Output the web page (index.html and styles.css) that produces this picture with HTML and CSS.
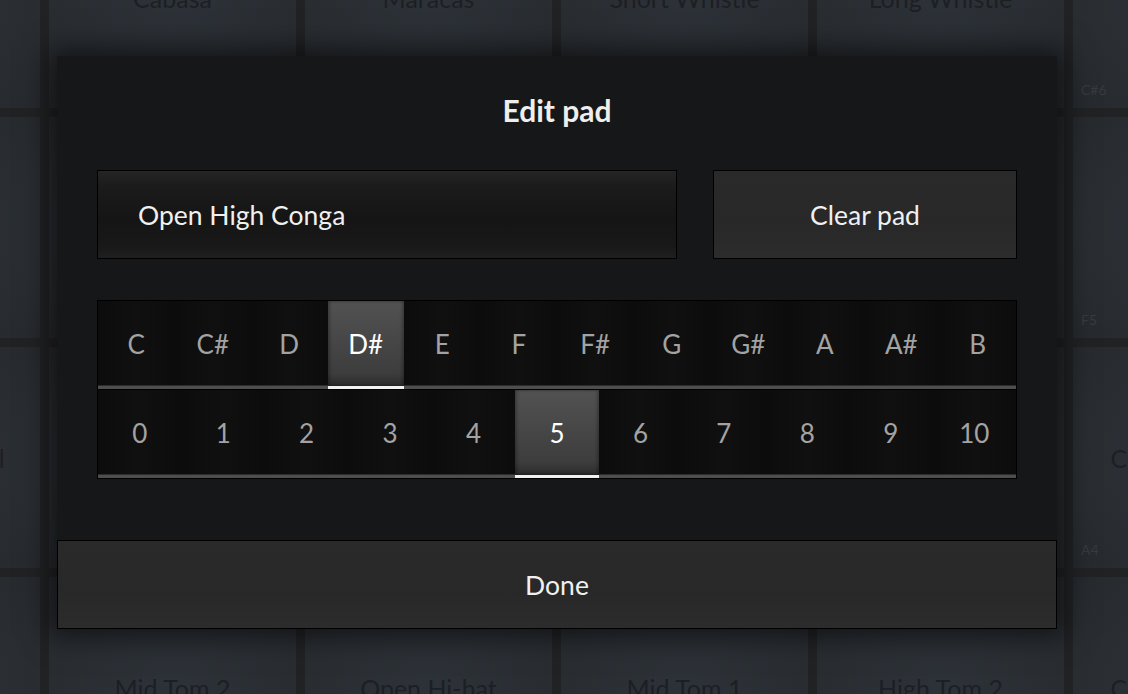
FILE: index.html
```html
<!DOCTYPE html>
<html lang="en">
<head>
  <meta charset="UTF-8">
  <title>Edit pad</title>
  <link rel="stylesheet" href="styles.css">
</head>
<body>
  <!-- pad grid behind the dialog -->
  <div class="pads">
    <div class="pad"><span class="pad-name">Vibraslap</span><span class="pad-note">A5</span></div>
    <div class="pad"><span class="pad-name">Cabasa</span><span class="pad-note">A#5</span></div>
    <div class="pad"><span class="pad-name">Maracas</span><span class="pad-note">B5</span></div>
    <div class="pad"><span class="pad-name">Short Whistle</span><span class="pad-note">C6</span></div>
    <div class="pad"><span class="pad-name">Long Whistle</span><span class="pad-note">C6</span></div>
    <div class="pad"><span class="pad-name">Short Guiro</span><span class="pad-note">C#6</span></div>

    <div class="pad"><span class="pad-name">High Agogo</span><span class="pad-note">G#5</span></div>
    <div class="pad"><span class="pad-name">Low Agogo</span><span class="pad-note">G5</span></div>
    <div class="pad"><span class="pad-name">Open High Conga</span><span class="pad-note">D#5</span></div>
    <div class="pad"><span class="pad-name">Low Conga</span><span class="pad-note">E5</span></div>
    <div class="pad"><span class="pad-name">High Timbale</span><span class="pad-note">F5</span></div>
    <div class="pad"><span class="pad-name">Low Bongo</span><span class="pad-note">F5</span></div>

    <div class="pad"><span class="pad-name">Chinese Cymbal</span><span class="pad-note">E4</span></div>
    <div class="pad"><span class="pad-name">Ride Bell</span><span class="pad-note">F4</span></div>
    <div class="pad"><span class="pad-name">Tambourine</span><span class="pad-note">F#4</span></div>
    <div class="pad"><span class="pad-name">Splash Cymbal</span><span class="pad-note">G4</span></div>
    <div class="pad"><span class="pad-name">Cowbell</span><span class="pad-note">G#4</span></div>
    <div class="pad"><span class="pad-name">Crash Cymbal 2</span><span class="pad-note">A4</span></div>

    <div class="pad"><span class="pad-name">Low Tom</span><span class="pad-note">A2</span></div>
    <div class="pad"><span class="pad-name">Mid Tom 2</span><span class="pad-note">B2</span></div>
    <div class="pad"><span class="pad-name">Open Hi-hat</span><span class="pad-note">A#2</span></div>
    <div class="pad"><span class="pad-name">Mid Tom 1</span><span class="pad-note">C3</span></div>
    <div class="pad"><span class="pad-name">High Tom 2</span><span class="pad-note">D3</span></div>
    <div class="pad"><span class="pad-name">Crash Cymbal 1</span><span class="pad-note">C#3</span></div>
  </div>

  <!-- edit dialog -->
  <div class="dialog">
    <h1 class="dialog-title">Edit pad</h1>

    <div class="top-row">
      <div class="name-field">Open High Conga</div>
      <button class="btn clear-btn">Clear pad</button>
    </div>

    <div class="picker">
      <div class="picker-row notes">
        <div class="cell">C</div>
        <div class="cell">C#</div>
        <div class="cell">D</div>
        <div class="cell selected">D#</div>
        <div class="cell">E</div>
        <div class="cell">F</div>
        <div class="cell">F#</div>
        <div class="cell">G</div>
        <div class="cell">G#</div>
        <div class="cell">A</div>
        <div class="cell">A#</div>
        <div class="cell">B</div>
      </div>
      <div class="picker-row octaves">
        <div class="cell">0</div>
        <div class="cell">1</div>
        <div class="cell">2</div>
        <div class="cell">3</div>
        <div class="cell">4</div>
        <div class="cell selected">5</div>
        <div class="cell">6</div>
        <div class="cell">7</div>
        <div class="cell">8</div>
        <div class="cell">9</div>
        <div class="cell">10</div>
      </div>
    </div>

    <button class="btn done-btn">Done</button>
  </div>
</body>
</html>
```

FILE: styles.css
```css
/* General styles */
body {
  margin: 0;
  padding: 0;
  background: #212224;
  font-family: 'Lato', 'Open Sans', sans-serif;
  overflow: hidden;
  height: 694px;
  position: relative;
}

/* Pad grid (dimmed, behind dialog) */
.pads {
  display: grid;
  grid-template-columns: repeat(6, 247px);
  grid-template-rows: repeat(4, 221px);
  gap: 9px;
  margin-left: -207px;
  margin-top: -113px;
}

.pad {
  position: relative;
  display: flex;
  align-items: center;
  justify-content: center;
  background: radial-gradient(ellipse at center, #2d3238 0%, #292d32 70%, #26292d 100%);
}

.pad-name {
  font-size: 25px;
  color: #1c1f23;
  white-space: nowrap;
}

.pad-note {
  position: absolute;
  left: 8px;
  bottom: 10px;
  font-size: 14px;
  color: #363b41;
}

/* Dialog */
.dialog {
  position: absolute;
  left: 57px;
  top: 56px;
  width: 1000px;
  height: 573px;
  background: #161718;
  box-shadow: 0 0 26px 8px rgba(0, 0, 0, 0.55);
  display: flex;
  flex-direction: column;
}

.dialog-title {
  margin: 0;
  height: 114px;
  padding-bottom: 6px;
  box-sizing: border-box;
  display: flex;
  align-items: center;
  justify-content: center;
  font-size: 30px;
  font-weight: bold;
  color: #eeeeee;
}

.top-row {
  display: flex;
  gap: 36px;
  padding: 0 40px;
  height: 89px;
}

.name-field {
  width: 580px;
  box-sizing: border-box;
  border: 1px solid #000;
  background: linear-gradient(to bottom, #252525 0%, #1b1b1b 18%, #151515 55%, #181818 85%, #1f1f1f 100%);
  color: #f0f0f0;
  font-size: 26.5px;
  display: flex;
  align-items: center;
  padding-left: 40px;
}

.btn {
  font-family: inherit;
  font-size: 26.5px;
  color: #f0f0f0;
  border: 1px solid #000;
  background: linear-gradient(to bottom, #2a2a2a, #282828 60%, #2c2c2c);
  cursor: pointer;
  padding: 0;
}

.clear-btn {
  flex: 1;
}

/* Note / octave picker */
.picker {
  margin: 41px 40px 0;
  border: 1px solid #000;
  border-top: none;
  background: #000;
}

.picker-row {
  display: flex;
  height: 89px;
  border-top: 1px solid #000;
  box-sizing: border-box;
}

.cell {
  flex: 1;
  display: flex;
  align-items: center;
  justify-content: center;
  font-size: 26px;
  color: #a3a3a3;
  background: linear-gradient(to right, #0c0c0c 0%, #101010 50%, #0c0c0c 100%);
  border-bottom: 3px solid #4e4e4e;
  box-shadow: inset 0 -1px 0 #2c2c2c;
}

.cell.selected {
  color: #ffffff;
  background: linear-gradient(to bottom, #525252 0%, #474747 45%, #3d3d3d 85%, #2b2b2b 100%);
  border-bottom-color: #f2f2f2;
  box-shadow: inset 2px 0 3px rgba(0, 0, 0, 0.25), inset -2px 0 3px rgba(0, 0, 0, 0.25);
}

.done-btn {
  margin-top: 61px;
  height: 89px;
  width: 100%;
}
```
